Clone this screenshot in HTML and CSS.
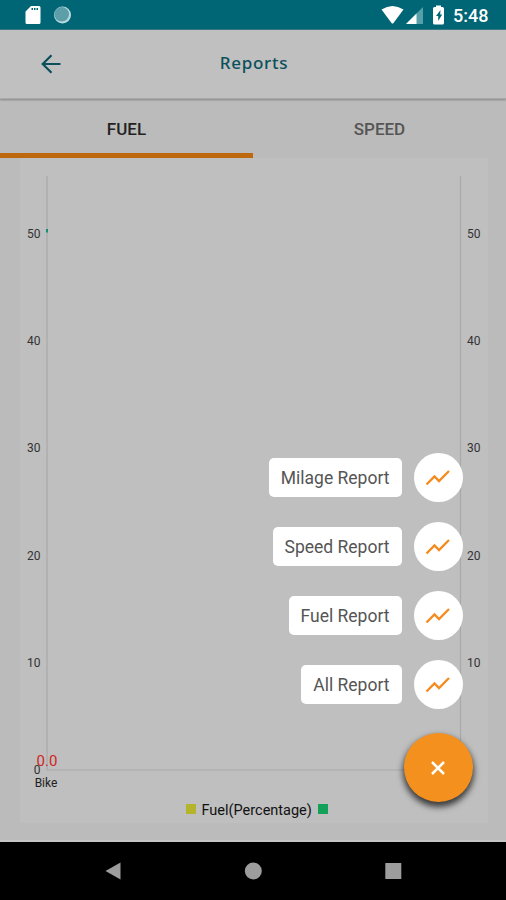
FILE: index.html
```html
<!DOCTYPE html>
<html lang="en">
<head>
  <meta charset="UTF-8" />
  <meta name="viewport" content="width=device-width, initial-scale=1" />
  <title>Reports</title>
  <link rel="stylesheet" href="styles.css">
</head>
<body>
  <div class="status-bar">
    <svg class="status-left" width="50" height="20" viewBox="0 0 50 20">
      <path fill="#fff" fill-rule="evenodd" d="M6 1h8q1.500 0 1.500 1.500v15q0 1.500-1.500 1.500H2Q.5 19 .5 17.500V6.500zM6.500 3v2h1.500v-2zM9 3v2h1.500v-2zM11.500 3v2h1.500v-2z"/>
      <circle cx="37.500" cy="10" r="8.500" fill="#b9dade"/>
      <circle cx="36.700" cy="9.300" r="7.300" fill="#5c9fa9"/>
    </svg>
    <svg class="status-right" width="66" height="20" viewBox="0 0 66 20">
      <path fill="#fff" d="M.5 4.500Q11.500-2.500 22.500 4.500L12.500 18q-1 1.200-2 0z"/>
      <path fill="#57a0aa" d="M42 2v17H25z"/>
      <path fill="#fff" d="M35.500 8.500V19H25z"/>
      <path fill="#fff" d="M55 .5h5V2h1.500q1.500 0 1.500 1.500v14.500q0 1.500-1.500 1.500h-8q-1.500 0-1.500-1.500v-14.500q0-1.500 1.500-1.500h1.500z"/>
      <path fill="#006675" d="M59.500 5l-4.500 6h2.200v5l4-6.500h-2z"/>
    </svg>
    <span class="clock">5:48</span>
  </div>

  <header class="toolbar">
    <svg class="back" width="20" height="20" viewBox="0 0 20 20">
      <path d="M19.500 10H2M10.500 1.200L1.700 10l8.800 8.800"/>
    </svg>
    <h1>Reports</h1>
  </header>

  <nav class="tabs">
    <div class="tab active">FUEL</div>
    <div class="tab">SPEED</div>
  </nav>

  <main class="content">
    <div class="chart">
      <svg width="468" height="665" viewBox="20 158 468 665">
        <path class="axis" d="M47 176V770H460.500V176"/>
        <rect x="46" y="229" width="2" height="3.500" fill="#168f72"/>
        <g class="ticks left">
          <text x="40.500" y="238">50</text>
          <text x="40.500" y="345.200">40</text>
          <text x="40.500" y="452.400">30</text>
          <text x="40.500" y="559.600">20</text>
          <text x="40.500" y="666.800">10</text>
          <text x="40.500" y="774">0</text>
        </g>
        <g class="ticks">
          <text x="467" y="238">50</text>
          <text x="467" y="345.200">40</text>
          <text x="467" y="452.400">30</text>
          <text x="467" y="559.600">20</text>
          <text x="467" y="666.800">10</text>
        </g>
        <text class="value" x="47" y="765.500">0.0</text>
        <text class="category" x="46" y="787">Bike</text>
        <rect x="186" y="804" width="10" height="10" fill="#b5b52b"/>
        <text class="legend" x="201.500" y="814.500">Fuel(Percentage)</text>
        <rect x="318" y="804" width="10" height="10" fill="#13a058"/>
      </svg>
    </div>
  </main>

  <!-- expanded speed dial, floats over the chart -->
  <div class="speed-dial">
    <div class="action">
      <span class="label">Milage Report</span>
      <span class="mini"><svg width="26" height="18" viewBox="0 0 26 18"><path d="M1.500 15.500L9.500 7.500L14 12L24 2"/></svg></span>
    </div>
    <div class="action">
      <span class="label">Speed Report</span>
      <span class="mini"><svg width="26" height="18" viewBox="0 0 26 18"><path d="M1.500 15.500L9.500 7.500L14 12L24 2"/></svg></span>
    </div>
    <div class="action">
      <span class="label">Fuel Report</span>
      <span class="mini"><svg width="26" height="18" viewBox="0 0 26 18"><path d="M1.500 15.500L9.500 7.500L14 12L24 2"/></svg></span>
    </div>
    <div class="action">
      <span class="label">All Report</span>
      <span class="mini"><svg width="26" height="18" viewBox="0 0 26 18"><path d="M1.500 15.500L9.500 7.500L14 12L24 2"/></svg></span>
    </div>
    <div class="fab">
      <svg width="16" height="16" viewBox="0 0 16 16"><path d="M2 2l12 12M14 2L2 14"/></svg>
    </div>
  </div>

  <footer class="nav-bar">
    <svg width="18" height="18" viewBox="0 0 18 18"><path d="M1.500 9L16.500 .5v17z"/></svg>
    <svg width="18" height="18" viewBox="0 0 18 18"><circle cx="9.300" cy="9" r="8.500"/></svg>
    <svg width="18" height="18" viewBox="0 0 18 18"><rect x="1.300" y="1" width="16" height="16" rx=".5"/></svg>
  </footer>
</body>
</html>
```
FILE: styles.css
```css
* {
  box-sizing: border-box;
}
body {
  margin: 0;
  width: 506px;
  height: 900px;
  display: flex;
  flex-direction: column;
  position: relative;
  overflow: hidden;
  background: #bbb;
  font-family: Roboto, sans-serif;
}
svg {
  display: block;
}
.status-bar {
  height: 30px;
  display: flex;
  align-items: center;
  padding: 0 17px 0 25px;
  background: #006675;
  border-bottom: 1px solid #397b85;
}
.status-right {
  margin-left: auto;
}
.clock {
  margin-left: 6px;
  padding-top: 2px;
  width: 36px;
  color: #fff;
  font-size: 18px;
  font-weight: 500;
  white-space: nowrap;
}
.toolbar {
  height: 69px;
  display: grid;
  grid-template-columns: 41px 1fr 41px;
  align-items: center;
  background: #c0c0c0;
  border-bottom: 1px solid #aaa;
  box-shadow: 0 1px 2px rgba(0,0,0,0.3);
  z-index: 1;
}
.back {
  justify-self: end;
  margin-right: -20px;
  fill: none;
  stroke: #0a505c;
  stroke-width: 2.2;
}
.toolbar h1 {
  margin: 0;
  padding: 0 0 3px 2px;
  color: #0a505c;
  font-family: "Noto Sans", sans-serif;
  font-size: 17px;
  font-weight: 500;
  letter-spacing: 0.7px;
  text-align: center;
}
.tabs {
  height: 59px;
  display: flex;
}
.tab {
  flex: 1;
  padding-top: 2px;
  border-bottom: 5px solid transparent;
  color: #555;
  font-size: 17px;
  font-weight: 500;
  line-height: 56px;
  text-align: center;
}
.tab.active {
  color: #222;
  border-color: #bd680d;
}
.content {
  height: 684px;
  padding: 0 18px 0 20px;
  border-bottom: 2px solid #c6c6c6;
}
.chart {
  height: 665px;
  background: #bfbfbf;
}
.axis {
  fill: none;
  stroke: #a9a9a9;
  stroke-width: 1.2;
}
.ticks {
  fill: #333;
  font-size: 12px;
}
.left {
  text-anchor: end;
}
.value {
  fill: #d02525;
  font-size: 15px;
  text-anchor: middle;
}
.category {
  fill: #222;
  font-size: 12px;
  text-anchor: middle;
}
.legend {
  fill: #111;
  font-size: 14.5px;
}
.speed-dial {
  position: absolute;
  right: 33.5px;
  top: 453px;
  display: flex;
  flex-direction: column;
  align-items: flex-end;
  gap: 20px;
}
.action {
  display: flex;
  align-items: center;
  gap: 12px;
  margin-right: 10px;
}
.label {
  height: 39px;
  padding: 0 12px;
  border-radius: 5px;
  background: #fff;
  color: #555;
  font-size: 17.5px;
  line-height: 40px;
}
.mini, .fab {
  display: flex;
  align-items: center;
  justify-content: center;
  border-radius: 50%;
}
.mini {
  width: 49px;
  height: 49px;
  background: #fff;
}
.mini path {
  fill: none;
  stroke: #f58a1d;
  stroke-width: 2.3;
}
.fab {
  width: 69px;
  height: 69px;
  margin-top: 4px;
  background: #f4901d;
  box-shadow: 0 4px 6px 1px rgba(0,0,0,0.7);
}
.fab path {
  stroke: #fff;
  stroke-width: 2.5;
}
.nav-bar {
  height: 58px;
  display: flex;
  align-items: center;
  justify-content: center;
  gap: 122px;
  background: #000;
}
.nav-bar svg {
  fill: #9d9d9d;
}
```
